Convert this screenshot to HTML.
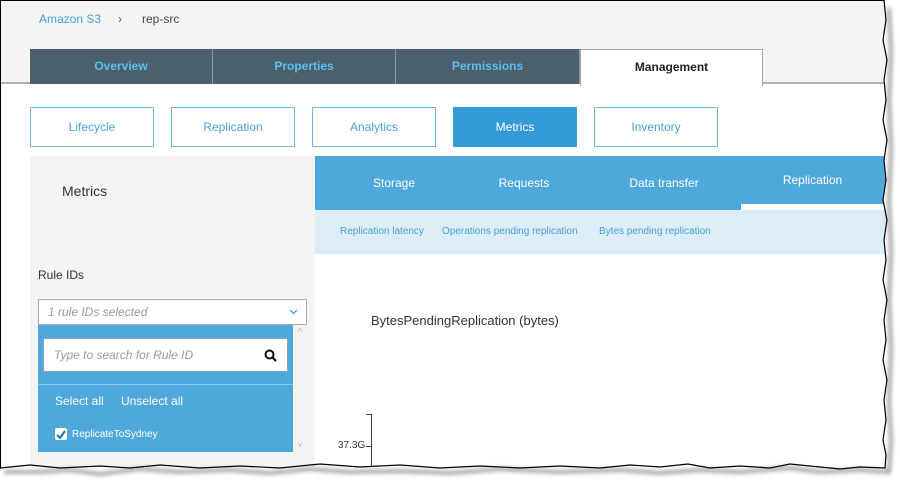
<!DOCTYPE html>
<html><head><meta charset="utf-8"><style>
*{margin:0;padding:0;box-sizing:border-box}
body{width:900px;height:486px;background:#fff;font-family:"Liberation Sans",Arial,sans-serif;position:relative;overflow:hidden}
.a{position:absolute}
.top{left:0;top:0;width:900px;height:84px;background:#f4f5f5;border-bottom:2px solid #aab4bb}
.tab{top:49px;height:35px;background:#4b5f6d;color:#5cc1ee;font-weight:bold;font-size:12px;text-align:center;line-height:35px;border-right:1px solid #8a9aa5}
.btn{top:107px;width:124px;height:40px;border:1px solid #6db7e6;color:#4a9fd5;font-size:12px;text-align:center;line-height:38px;background:#fff}
.st{top:156px;height:54px;line-height:54px;color:#fff;font-size:12px;text-align:center}
.sub{top:226px;font-size:10px;color:#4a9fd5}
</style></head><body>
<div class="a top"></div>
<div class="a" style="left:39px;top:12px;font-size:12px;color:#4a9fd5">Amazon S3</div>
<div class="a" style="left:118px;top:12px;font-size:12px;color:#555">›</div>
<div class="a" style="left:142px;top:12px;font-size:12px;color:#444">rep-src</div>
<div class="a tab" style="left:30px;width:183px">Overview</div>
<div class="a tab" style="left:213px;width:183px">Properties</div>
<div class="a tab" style="left:396px;width:184px">Permissions</div>
<div class="a" style="left:580px;top:49px;width:183px;height:37px;background:#fff;border:1px solid #9aa6ae;border-bottom:none;text-align:center;line-height:35px;font-weight:bold;font-size:12px;color:#222">Management</div>
<div class="a btn" style="left:30px">Lifecycle</div>
<div class="a btn" style="left:171px">Replication</div>
<div class="a btn" style="left:312px">Analytics</div>
<div class="a btn" style="left:453px;background:#3499d7;border-color:#3499d7;color:#fff">Metrics</div>
<div class="a btn" style="left:594px">Inventory</div>
<div class="a" style="left:30px;top:156px;width:285px;height:330px;background:#f3f4f4"></div>
<div class="a" style="left:62px;top:183px;font-size:14px;color:#333">Metrics</div>
<div class="a" style="left:315px;top:156px;width:585px;height:54px;background:#4ea8dc"></div>
<div class="a st" style="left:340px;width:108px">Storage</div>
<div class="a st" style="left:470px;width:108px">Requests</div>
<div class="a st" style="left:610px;width:108px">Data transfer</div>
<div class="a st" style="left:741px;width:143px;line-height:48px">Replication</div>
<div class="a" style="left:741px;top:204px;width:150px;height:6px;background:#fff"></div>
<div class="a" style="left:315px;top:210px;width:585px;height:44px;background:#dcedf8"></div>
<div class="a sub" style="left:340px">Replication latency</div>
<div class="a sub" style="left:442px">Operations pending replication</div>
<div class="a sub" style="left:599px">Bytes pending replication</div>
<div class="a" style="left:38px;top:268px;font-size:12px;color:#333">Rule IDs</div>
<div class="a" style="left:38px;top:299px;width:269px;height:26px;background:#fff;border:1px solid #aab;font-size:12px;font-style:italic;color:#999;padding:5px 9px">1 rule IDs selected<svg style="position:absolute;right:8px;top:9px" width="9" height="6"><path d="M1 1l3.5 3.5L8 1" fill="none" stroke="#4a9fd5" stroke-width="1.3"/></svg></div>
<div class="a" style="left:38px;top:325px;width:255px;height:127px;background:#4ea8dc"></div>
<div class="a" style="left:293px;top:325px;width:14px;height:127px;background:#f3f4f4;color:#bbb;font-size:9px;text-align:center">˄<div style="position:absolute;bottom:2px;width:14px">˅</div></div>
<div class="a" style="left:43px;top:338px;width:245px;height:34px;background:#fff;border:1px solid #8aa;font-size:12px;font-style:italic;color:#999;padding:9px 10px">Type to search for Rule ID
<svg style="position:absolute;right:10px;top:10px" width="13" height="13" viewBox="0 0 13 13"><circle cx="5.5" cy="5.5" r="4" fill="none" stroke="#111" stroke-width="2"/><path d="M8.5 8.5L12 12" stroke="#111" stroke-width="2.2"/></svg></div>
<div class="a" style="left:38px;top:384px;width:255px;height:1px;background:#8fc5e8"></div>
<div class="a" style="left:55px;top:394px;font-size:12px;color:#fff">Select all</div>
<div class="a" style="left:121px;top:394px;font-size:12px;color:#fff">Unselect all</div>
<div class="a" style="left:55px;top:428px;width:12px;height:12px;background:#fff;border-radius:2px"><svg width="12" height="12"><path d="M2 6l3 3 5-7" fill="none" stroke="#1f6fb5" stroke-width="2"/></svg></div>
<div class="a" style="left:72px;top:429px;font-size:10px;color:#fff">ReplicateToSydney</div>
<div class="a" style="left:371px;top:313px;font-size:13px;color:#333">BytesPendingReplication (bytes)</div>
<div class="a" style="left:371px;top:414px;width:1px;height:72px;background:#444"></div>
<div class="a" style="left:366px;top:414px;width:6px;height:1px;background:#444"></div>
<div class="a" style="left:366px;top:446px;width:5px;height:1px;background:#444"></div>
<div class="a" style="left:338px;top:440px;font-size:10px;color:#333">37.3G</div>
<div class="a" style="left:0;top:0;width:1px;height:470px;background:#000"></div>
<div class="a" style="left:0;top:0;width:886px;height:1px;background:#000"></div>
<svg class="a" style="left:0;top:0" width="900" height="486">
<defs><filter id="s"><feGaussianBlur stdDeviation="2"/></filter></defs>
<path fill-rule="evenodd" fill="#fff" stroke="none" d="M0 0H900V486H0Z M0 0 L884 0 L886 20 L883 40 L887 60 L884 80 L886 100 L883 120 L887 140 L884 160 L886 180 L883 200 L887 220 L884 240 L886 260 L883 280 L887 300 L884 320 L886 340 L883 360 L887 380 L884 400 L886 420 L883 440 L886 455 L885 468 L860 467 L840 469 L810 466 L790 464 L770 468 L740 466 L710 468 L688 464 L660 467 L630 465 L600 468 L560 466 L520 468 L480 466 L440 468 L400 465 L360 467 L320 464 L280 468 L240 466 L200 468 L160 465 L130 468 L100 466 L60 468 L30 465 L0 468 Z"/>
<path d="M4 472 L40 472 L70 470 L100 474 L140 469 L180 472 L230 470 L270 473 L310 469 L350 472 L400 471 L450 473 L500 469 L560 472 L620 470 L660 473 L700 470 L740 472 L790 468 L820 472 L860 470 L889 472 L891 440 L889 400 L891 350 L889 300 L891 250 L889 200 L891 150 L889 100 L891 50 L889 8" fill="none" stroke="#888" stroke-width="3" filter="url(#s)"/>
<path fill="none" stroke="#000" stroke-width="1.2" d="M884 0 L886 20 L883 40 L887 60 L884 80 L886 100 L883 120 L887 140 L884 160 L886 180 L883 200 L887 220 L884 240 L886 260 L883 280 L887 300 L884 320 L886 340 L883 360 L887 380 L884 400 L886 420 L883 440 L886 455 L885 468 L860 467 L840 469 L810 466 L790 464 L770 468 L740 466 L710 468 L688 464 L660 467 L630 465 L600 468 L560 466 L520 468 L480 466 L440 468 L400 465 L360 467 L320 464 L280 468 L240 466 L200 468 L160 465 L130 468 L100 466 L60 468 L30 465 L0 468"/>
</svg>
</body></html>
